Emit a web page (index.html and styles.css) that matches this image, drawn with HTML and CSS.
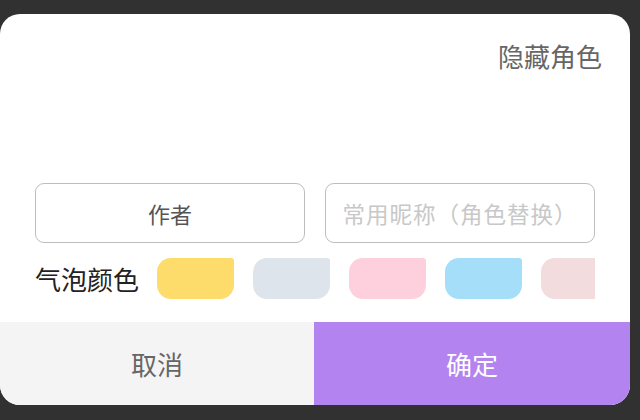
FILE: index.html
```html
<!DOCTYPE html>
<html lang="zh-CN">
<head>
<meta charset="utf-8">
<link rel="stylesheet" href="styles.css">
</head>
<body>
<div class="card">
  <div class="content">
    <div class="hide-role">隐藏角色</div>
    <div class="inputs">
      <div class="field">作者</div>
      <div class="field placeholder">常用昵称（角色替换）</div>
    </div>
    <div class="colors">
      <span class="label">气泡颜色</span>
      <div class="swatches">
        <span class="swatch yellow"></span>
        <span class="swatch gray"></span>
        <span class="swatch pink"></span>
        <span class="swatch blue"></span>
        <span class="swatch rose"></span>
      </div>
    </div>
  </div>
  <div class="actions">
    <div class="btn cancel">取消</div>
    <div class="btn ok">确定</div>
  </div>
</div>
</body>
</html>
```
FILE: styles.css
```css
html, body {
  margin: 0;
  padding: 0;
  background: #313131;
  width: 640px;
  height: 420px;
  overflow: hidden;
  font-family: "Noto Sans CJK SC", "Noto Sans", sans-serif;
}
.card {
  margin-top: 14px;
  width: 630px;
  height: 391px;
  background: #fff;
  border-radius: 20px;
  overflow: hidden;
  display: flex;
  flex-direction: column;
}
.content {
  flex: 1;
  padding: 24px 28px 0 35px;
}
.hide-role {
  text-align: right;
  font-size: 26px;
  line-height: 36px;
  color: #666;
}
.inputs {
  margin-top: 109px;
  display: flex;
  gap: 20px;
}
.field {
  box-sizing: border-box;
  width: 270px;
  height: 60px;
  border: 1px solid #bdbdbd;
  border-radius: 9px;
  display: flex;
  align-items: center;
  justify-content: center;
  font-size: 22px;
  color: #555;
}
.field.placeholder {
  color: #c8c8c8;
  font-size: 22.5px;
  letter-spacing: 1px;
}
.colors {
  margin-top: 15px;
  display: flex;
  align-items: center;
  height: 41px;
}
.label {
  font-size: 26px;
  color: #222;
  margin-right: 18px;
  line-height: 41px;
}
.swatches {
  display: flex;
  gap: 19px;
  width: 438px;
  overflow: hidden;
}
.swatch {
  flex: none;
  width: 77px;
  height: 41px;
  border-radius: 14px 3px 14px 14px;
}
.yellow { background: #fedc6c; }
.gray { background: #dee4ec; }
.pink { background: #fecfdc; }
.blue { background: #a4def9; }
.rose { background: #f2dcdd; }
.actions {
  display: flex;
  height: 83px;
}
.btn {
  display: flex;
  align-items: center;
  justify-content: center;
  font-size: 26px;
}
.cancel {
  width: 314px;
  background: #f4f4f4;
  color: #666;
}
.ok {
  flex: 1;
  background: #b383f0;
  color: #fff;
}
```
